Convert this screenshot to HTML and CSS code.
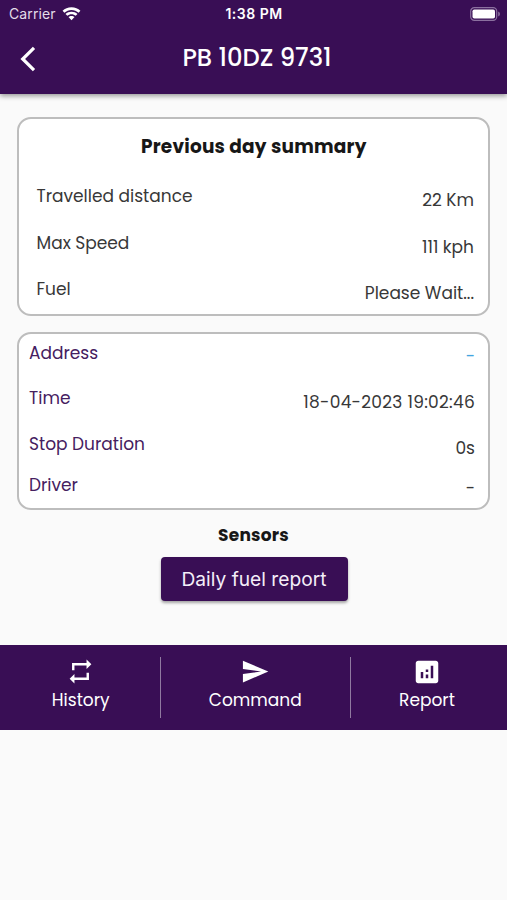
FILE: index.html
```html
<!DOCTYPE html>
<html lang="en">
<head>
<meta charset="utf-8">
<title>PB 10DZ 9731</title>
<link rel="stylesheet" href="styles.css">
</head>
<body>
<header class="top">
  <div class="status">
    <div class="carrier"><span class="carrier-name">Carrier</span>
      <svg width="19" height="14" viewBox="0 0 20 14" fill="#fff"><path d="M10 0C6.200 0 3 1.400.6 3.700L2.500 5.700C4.600 3.800 7.100 2.700 10 2.700S15.400 3.800 17.500 5.700L19.400 3.700C17 1.400 13.800 0 10 0ZM10 4.600C7.500 4.600 5.300 5.500 3.700 7L5.600 8.900C6.800 7.800 8.300 7.200 10 7.200S13.200 7.800 14.400 8.900L16.300 7C14.700 5.500 12.500 4.600 10 4.600ZM10 9C8.700 9 7.600 9.500 6.800 10.200L10 13.600 13.200 10.200C12.400 9.500 11.300 9 10 9Z"/></svg>
    </div>
    <span class="clock">1:38 PM</span>
    <svg class="battery" width="31" height="14" viewBox="0 0 31 14"><rect x=".7" y=".7" width="26" height="12.6" rx="3.6" fill="none" stroke="#8b709f" stroke-width="1.2"/><rect x="2.5" y="2.5" width="22.5" height="9" rx="1.8" fill="#fff"/><path d="M28.2 4.500Q30 5.400 30 7T28.200 9.500Z" fill="#8b709f"/></svg>
  </div>
  <div class="bar">
    <svg class="back" width="16" height="26" viewBox="0 0 16 26" fill="none" stroke="#fff" stroke-width="3.2"><path d="M14 1.800 2.700 13 14 24.200"/></svg>
    <h1 class="title">PB 10DZ 9731</h1>
  </div>
</header>
<main>
  <section class="card summary">
    <h2 class="heading">Previous day summary</h2>
    <div class="row"><span>Travelled distance</span><span class="value">22 Km</span></div>
    <div class="row"><span>Max Speed</span><span class="value">111 kph</span></div>
    <div class="row"><span>Fuel</span><span class="value">Please Wait...</span></div>
  </section>
  <section class="card details">
    <div class="row address"><span class="label">Address</span><span class="value link">-</span></div>
    <div class="row time"><span class="label">Time</span><span class="value date">18-04-2023 19:02:46</span></div>
    <div class="row stop"><span class="label">Stop Duration</span><span class="value">0s</span></div>
    <div class="row driver"><span class="label">Driver</span><span class="value dash">-</span></div>
  </section>
  <h3 class="sensors">Sensors</h3>
  <button class="report-button">Daily fuel report</button>
</main>
<nav class="nav">
  <a class="tab first">
    <svg width="29" height="29" viewBox="0 0 24 24" fill="#fff"><path d="M7 7h10v3l4-4-4-4v3H5v6h2V7zm10 10H7v-3l-4 4 4 4v-3h12v-6h-2v4z"/></svg>
    <span>History</span>
  </a>
  <a class="tab middle">
    <svg width="30" height="29" viewBox="0 0 24 24" fill="#fff"><path d="M2 21 23 12 2 3 2 10 17 12 2 14z"/></svg>
    <span>Command</span>
  </a>
  <a class="tab last">
    <svg width="30" height="30" viewBox="0 0 24 24" fill="#fff"><path fill-rule="evenodd" d="M19 3H5c-1.100 0-2 .9-2 2v14c0 1.100.9 2 2 2h14c1.100 0 2-.9 2-2V5c0-1.100-.9-2-2-2zM9 17H7v-5h2v5zm4 0h-2v-3h2v3zm0-5h-2v-2h2v2zm4 5h-2V7h2v10z"/></svg>
    <span>Report</span>
  </a>
</nav>
</body>
</html>
```
FILE: styles.css
```css
* { box-sizing: border-box; }
body {
  margin: 0;
  background: #fafafa;
  color: #383838;
  font: 400 17px/24px Poppins, Inter, sans-serif;
}
h1, h2, h3 { margin: 0; }
svg { display: block; flex: none; }
.top { height: 94px; background: #390e55; color: #fff; box-shadow: 0 2px 5px rgba(0, 0, 0, .4); }
.status { display: grid; grid-template-columns: 1fr auto 1fr; align-items: center; height: 27px; padding: 0 6px 0 9px; font-family: Inter, sans-serif; }
.carrier { display: flex; gap: 6px; align-items: center; color: #e4dce9; }
.carrier-name { font-size: 14px; letter-spacing: .1px; }
.clock { font-size: 14px; font-weight: 600; letter-spacing: .5px; margin-left: -2px; }
.battery { justify-self: end; }
.bar { display: grid; grid-template-columns: 60px 1fr 60px; align-items: center; height: 64px; }
.back { margin-left: 20px; }
.title { padding-bottom: 2px; margin-left: 7px; text-align: center; font-size: 24.3px; font-weight: 500; line-height: 32px; white-space: nowrap; }
main { display: flex; flex-direction: column; align-items: center; padding-top: 23px; }
.card { width: 473px; border: 2px solid #bdbdbd; border-radius: 14px; background: #fff; }
.summary { height: 199px; padding: 0 14px 0 17.5px; }
.heading { padding-top: 1px; color: #171717; font-size: 18.5px; font-weight: 700; line-height: 53px; letter-spacing: .22px; text-align: center; margin-left: -3px; }
.row { display: flex; justify-content: space-between; align-items: center; height: 46.5px; white-space: nowrap; }
.value { padding-top: 8px; }
.details { height: 178px; margin-top: 16px; padding: 0 13px 0 10px; }
.label { color: #45205f; }
.address { height: 38px; }
.time { height: 52px; }
.stop { height: 40px; }
.driver { height: 42px; }
.date { letter-spacing: .28px; }
.link { color: #43a5e0; padding-top: 5px; }
.dash { padding-top: 6px; }
.sensors { margin-top: 13px; color: #171717; font-size: 17px; font-weight: 700; line-height: 24px; letter-spacing: .2px; }
.report-button { width: 187px; margin-left: 1px; height: 44px; margin-top: 10px; padding: 0; border: 0; border-radius: 4px; background: #390e55; color: #f4edf8; font: 400 19.2px/44px Inter, sans-serif; box-shadow: 0 2px 3px rgba(0, 0, 0, .35); }
.nav { display: grid; grid-template-columns: 160.5px 190.5px 156px; height: 85px; margin-top: 44px; background: #390e55; color: #fff; padding: 12px 0; }
.tab { display: flex; flex-direction: column; align-items: center; height: 61px; border-right: 1.5px solid #907aa0; }
.tab span { margin-top: 2px; }
.tab.first { padding-left: 2px; }
.tab.last { border: 0; padding-right: 4px; }
.tab.last span { margin-top: 1px; }
```
